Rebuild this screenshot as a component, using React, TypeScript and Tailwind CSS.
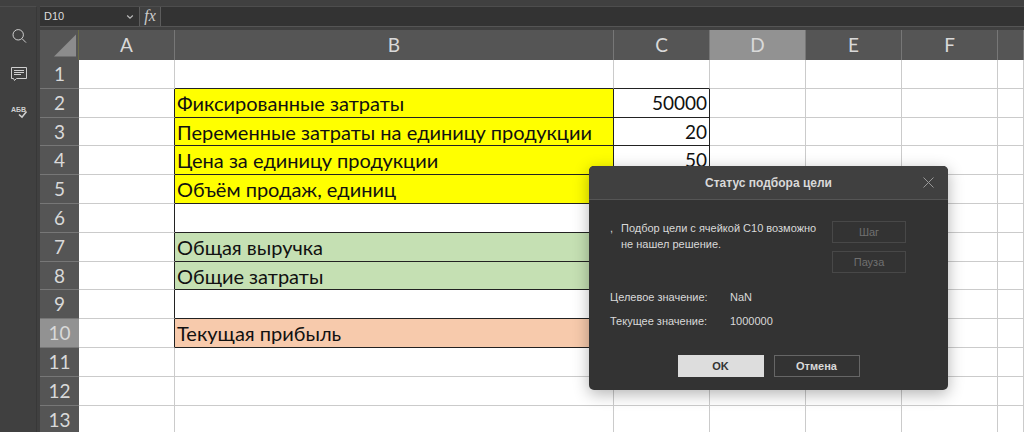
import { clsx } from 'clsx';

const columns = ['A', 'B', 'C', 'D', 'E', 'F', 'G'];
const rowNumbers = [1, 2, 3, 4, 5, 6, 7, 8, 9, 10, 11, 12, 13];
const activeCell = { column: 'D', row: 10 };

const labels: Record<number, string> = {
  2: 'Фиксированные затраты',
  3: 'Переменные затраты на единицу продукции',
  4: 'Цена за единицу продукции',
  5: 'Объём продаж, единиц',
  7: 'Общая выручка',
  8: 'Общие затраты',
  10: 'Текущая прибыль',
};

const values: Record<number, string> = {
  2: '50000',
  3: '20',
  4: '50',
};

function fillFor(row: number) {
  if (row >= 2 && row <= 5) return 'bg-[#ffff00]';
  if (row === 7 || row === 8) return 'bg-[#c5e0b3]';
  if (row === 10) return 'bg-[#f7caac]';
  return 'bg-white';
}

function cellClass(column: string, row: number) {
  const inTable = row >= 2 && row <= 10;
  const framedRight = inTable && ['A', 'B', 'C'].includes(column);
  const framedBottom = row >= 1 && row <= 10 && ['B', 'C'].includes(column);
  return clsx(
    'border-r border-b p-0 whitespace-nowrap',
    column === 'B' ? fillFor(row) : 'bg-white',
    column === 'B' && 'pl-0.5 text-left text-xl leading-6',
    column === 'C' && 'pr-0.5 text-right',
    framedRight ? 'border-r-[#222222]' : 'border-r-[#cbcbcb]',
    framedBottom ? 'border-b-[#222222]' : 'border-b-[#cbcbcb]',
  );
}

function Sidebar() {
  const button = 'flex h-6 w-full items-center justify-center text-[#cfcfcf]';
  return (
    <nav className="mr-[3px] flex w-[37px] shrink-0 flex-col gap-3.5 border-t border-r border-t-[#4d4d4d] border-r-[#383838] bg-[#404040] pt-[17px] pl-0.5">
      <button className={button} aria-label="Поиск">
        <svg width="16" height="16" viewBox="0 0 16 16" fill="none" stroke="currentColor">
          <circle cx="7.2" cy="6.8" r="5.2" />
          <path d="M11 10.600 15 14.600" />
        </svg>
      </button>
      <button className={button} aria-label="Комментарии">
        <svg width="18" height="16" viewBox="0 0 18 16" fill="none" stroke="currentColor">
          <path d="M1.5 1.5h15v11H6.500L4.500 14.500 3.500 12.500h-2z" />
          <path d="M4 4.5h10M4 6.5h10M4 8.5h7" />
        </svg>
      </button>
      <button className={button} aria-label="Проверка орфографии">
        <svg width="18" height="16" viewBox="0 0 18 16" fill="none" stroke="currentColor">
          <text
            x="1"
            y="8"
            fill="currentColor"
            stroke="none"
            fontSize="7"
            fontWeight="bold"
            fontFamily="Liberation Sans, sans-serif"
          >
            АБВ
          </text>
          <path d="M9 10.5 12 13.2 16.500 7.5" strokeWidth="1.6" />
        </svg>
      </button>
    </nav>
  );
}

function FormulaBar() {
  return (
    <div className="flex h-[19px] shrink-0 bg-[#333333]">
      <div className="flex w-[99px] items-center">
        <input
          aria-label="Имя ячейки"
          defaultValue="D10"
          className="w-20 bg-transparent pl-1 text-[11px] text-[#dddddd] outline-none"
        />
        <button aria-label="Список имён" className="flex flex-1 justify-center text-[#bbbbbb]">
          <svg width="8" height="6" viewBox="0 0 8 6" fill="none" stroke="currentColor">
            <path d="M1.2 1.5 4 4.2 6.8 1.5" strokeWidth="1.2" />
          </svg>
        </button>
      </div>
      <button className="flex w-[22px] items-center justify-center border-x border-[#5c5c5c] bg-[#404040] pb-0.5 font-['Liberation_Serif',serif] text-base leading-4 text-[#cccccc] italic">
        fx
      </button>
      <input aria-label="Формула" className="min-w-0 flex-1 bg-transparent px-1 text-[11px] text-[#dddddd] outline-none" />
    </div>
  );
}

function Sheet() {
  return (
    <table className="w-full table-fixed border-separate border-spacing-0 font-[Lato,sans-serif] text-[19px] leading-6 text-[#111111]">
      <colgroup>
        <col className="w-[39px]" />
        <col className="w-24" />
        <col className="w-[439px]" />
        <col className="w-24" />
        <col className="w-24" />
        <col className="w-24" />
        <col className="w-24" />
        <col />
      </colgroup>
      <thead>
        <tr className="h-[30px] text-[#d9d9d9]">
          <th className="border-r border-[#6b6b45] bg-[#555555] p-0">
            <svg width="38" height="30" viewBox="0 0 38 30">
              <path d="M14 26.500 36 4.500V26.500Z" fill="#8c8c8c" />
            </svg>
          </th>
          {columns.map((column) => (
            <th
              key={column}
              className={clsx(
                'border-r border-[#777777] p-0 font-normal',
                column === activeCell.column ? 'bg-[#929292]' : 'bg-[#555555]',
              )}
            >
              {column !== 'G' && column}
            </th>
          ))}
        </tr>
      </thead>
      <tbody>
        {rowNumbers.map((row) => (
          <tr key={row} className={row % 5 === 3 ? 'h-7' : 'h-[29px]'}>
            <th
              className={clsx(
                'border-b border-[#777777] p-0 font-normal text-[#d9d9d9]',
                row === activeCell.row ? 'bg-[#929292]' : 'bg-[#555555]',
              )}
            >
              {row}
            </th>
            {columns.map((column) => (
              <td key={column} className={cellClass(column, row)}>
                {column === 'B' && labels[row]}
                {column === 'C' && values[row]}
              </td>
            ))}
          </tr>
        ))}
      </tbody>
    </table>
  );
}

function GoalSeekDialog() {
  const sideButton = 'h-[22px] w-[74px] border border-[#484848] text-[#707070]';
  const footerButton = 'h-[22px] w-[86px] border font-bold';
  return (
    <div
      role="dialog"
      aria-labelledby="goal-title"
      className="absolute top-[166px] left-[589px] w-[359px] overflow-hidden rounded-[5px] bg-[#333333] text-[11px] leading-4 text-[#d9d9d9] shadow-[0_4px_16px_rgba(0,0,0,0.3)]"
    >
      <div className="relative flex h-[34px] items-center justify-center border-b border-[#555555] bg-[#404040]">
        <h2 id="goal-title" className="text-xs font-bold">
          Статус подбора цели
        </h2>
        <button aria-label="Закрыть" className="absolute right-3.5 text-[#999999]">
          <svg width="11" height="11" viewBox="0 0 11 11" stroke="currentColor">
            <path d="M.5.5l10 10M10.500.5l-10 10" />
          </svg>
        </button>
      </div>
      <div className="flex px-[21px] pt-5">
        <span className="w-[11px]">,</span>
        <p className="w-[211px]">
          Подбор цели с ячейкой C10 возможно
          <br />
          не нашел решение.
        </p>
        <div className="flex flex-col gap-2 pt-px">
          <button disabled className={sideButton}>
            Шаг
          </button>
          <button disabled className={sideButton}>
            Пауза
          </button>
        </div>
      </div>
      <dl className="grid grid-cols-[120px_1fr] gap-y-2 px-[21px] pt-4">
        <dt>Целевое значение:</dt>
        <dd>NaN</dd>
        <dt>Текущее значение:</dt>
        <dd>1000000</dd>
      </dl>
      <div className="flex justify-center gap-2.5 pt-[26px] pb-[13px]">
        <button className={clsx(footerButton, 'border-[#dddddd] bg-[#dddddd] text-[#333333]')}>OK</button>
        <button className={clsx(footerButton, 'border-[#666666]')}>Отмена</button>
      </div>
    </div>
  );
}

export default function App() {
  return (
    <div className="relative flex h-screen flex-col overflow-hidden bg-[#404040] font-['Liberation_Sans',Arial,sans-serif]">
      <div className="h-1.5 shrink-0" />
      <div className="flex min-h-0 flex-1">
        <Sidebar />
        <main className="flex min-w-0 flex-1 flex-col border-t border-[#4d4d4d]">
          <FormulaBar />
          <div className="h-1 shrink-0 border-t border-[#555555]" />
          <div className="min-h-0 flex-1 overflow-hidden bg-white">
            <Sheet />
          </div>
        </main>
      </div>
      <GoalSeekDialog />
    </div>
  );
}
